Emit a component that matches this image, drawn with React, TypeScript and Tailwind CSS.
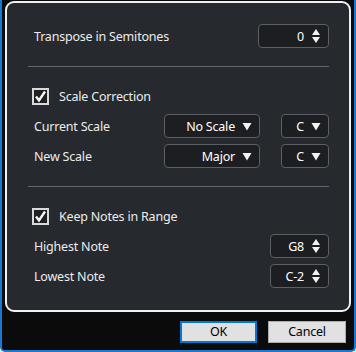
import React from "react";

const Down = () => (
  <svg width="10" height="9" viewBox="0 0 10 9" className="shrink-0">
    <path d="M0.5 1 L9.5 1 L5 8.5 Z" fill="#f2f2f2" />
  </svg>
);

const Spin = () => (
  <svg width="10" height="16" viewBox="0 0 10 16" className="shrink-0">
    <path d="M1 7 L9 7 L5 1 Z" fill="#f2f2f2" />
    <path d="M1 9 L9 9 L5 15 Z" fill="#f2f2f2" />
  </svg>
);

const Check = ({ label }: { label: string }) => (
  <div className="flex items-center h-[24px] pl-[4px]">
    <div className="w-[17px] h-[17px] border-2 border-[#d9d9d9] bg-[#1e2023] flex items-center justify-center">
      <svg width="13" height="13" viewBox="0 0 13 13">
        <path d="M2 6.5 L5 10.5 L11 1.5" stroke="#f5f5f5" strokeWidth="2.4" fill="none" />
      </svg>
    </div>
    <span className="ml-[10px] pt-[2px] text-[#ececec]">{label}</span>
  </div>
);

const Box = ({ w, children }: { w: string; children: React.ReactNode }) => (
  <div
    className={`${w} h-[24px] rounded-[4px] border border-[#5c5f63] bg-[#1c1e21] flex items-center justify-end pr-[7px] gap-[7px] text-white`}
  >
    {children}
  </div>
);

const Sep = () => <div className="h-px bg-[#65686c]" />;

const Label = ({ children, grow }: { children: React.ReactNode; grow?: boolean }) => (
  <span className={grow ? "flex-1 pt-[2px] text-[#ececec]" : "pt-[2px] text-[#ececec]"}>{children}</span>
);

const Val = ({ children }: { children: React.ReactNode }) => <span className="pt-[2px]">{children}</span>;

export default function App() {
  return (
    <div
      className="w-[356px] h-[352px] bg-[#0b0b0b] border-l-2 border-r-2 border-b-2 border-[#1a78d2] rounded-bl-[5px] rounded-br-[5px] text-[12.5px] tracking-[-0.2px] leading-none overflow-hidden"
      style={{ fontFamily: '"Noto Sans", "Open Sans", sans-serif' }}
    >
      <div className="ml-[3px] mt-px w-[346px] border-2 border-[#f0f0f0] rounded-[9px] bg-[#26292d] pl-[21px] pr-[20px] pt-[21px] pb-[22px] flex flex-col">
        <div className="flex items-center h-[24px] justify-between pl-[6px]">
          <Label>Transpose in Semitones</Label>
          <Box w="w-[71px]">
            <Val>0</Val>
            <Spin />
          </Box>
        </div>
        <div className="mt-[18px]">
          <Sep />
        </div>
        <div className="mt-[17px]">
          <Check label="Scale Correction" />
        </div>
        <div className="mt-[6px] flex items-center h-[24px] pl-[6px]">
          <Label grow>Current Scale</Label>
          <Box w="w-[96px]">
            <Val>No Scale</Val>
            <Down />
          </Box>
          <div className="w-[21px]" />
          <Box w="w-[48px]">
            <Val>C</Val>
            <Down />
          </Box>
        </div>
        <div className="mt-[6px] flex items-center h-[24px] pl-[6px]">
          <Label grow>New Scale</Label>
          <Box w="w-[96px]">
            <Val>Major</Val>
            <Down />
          </Box>
          <div className="w-[21px]" />
          <Box w="w-[48px]">
            <Val>C</Val>
            <Down />
          </Box>
        </div>
        <div className="mt-[18px]">
          <Sep />
        </div>
        <div className="mt-[17px]">
          <Check label="Keep Notes in Range" />
        </div>
        <div className="mt-[6px] flex items-center h-[24px] justify-between pl-[6px]">
          <Label>Highest Note</Label>
          <Box w="w-[59px]">
            <Val>G8</Val>
            <Spin />
          </Box>
        </div>
        <div className="mt-[6px] flex items-center h-[24px] justify-between pl-[6px]">
          <Label>Lowest Note</Label>
          <Box w="w-[59px]">
            <Val>C-2</Val>
            <Spin />
          </Box>
        </div>
      </div>
      <div className="mt-[9px] flex justify-end pr-[8px] gap-[11px]">
        <button className="w-[77px] h-[22px] border-2 border-[#0078d7] bg-[#e1e1e1] text-black text-[12.5px] pt-[1px]">
          OK
        </button>
        <button className="w-[78px] h-[22px] border border-[#adadad] bg-[#e1e1e1] text-black text-[12.5px] pt-[1px]">
          Cancel
        </button>
      </div>
    </div>
  );
}
